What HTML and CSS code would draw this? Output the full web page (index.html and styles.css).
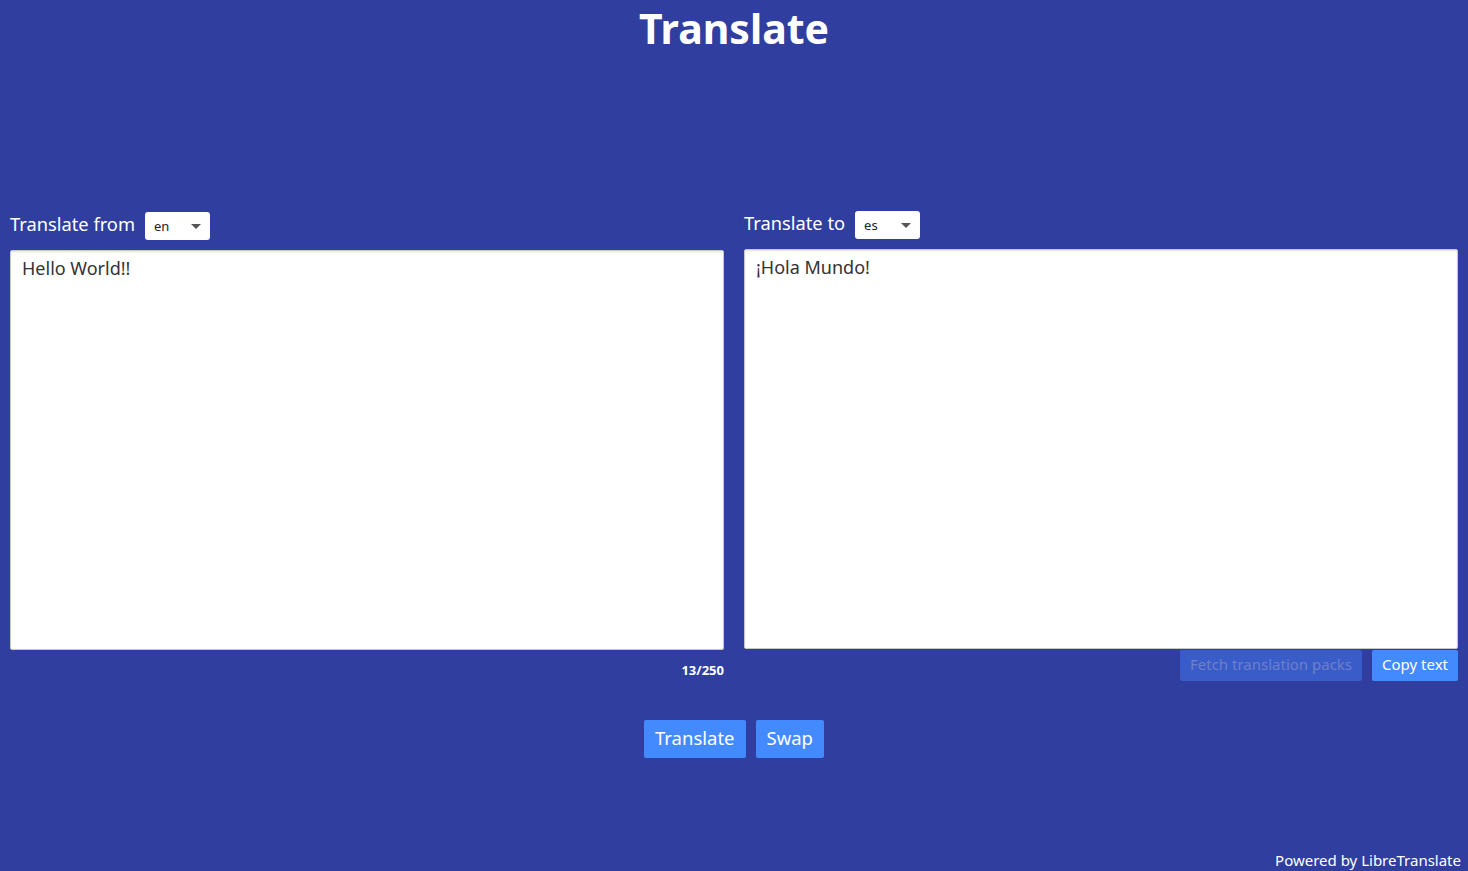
FILE: index.html
```html
<!DOCTYPE html>
<html>
<head>
<meta charset="utf-8">
<link rel="stylesheet" href="styles.css">
</head>
<body>
<h1 class="title">Translate</h1>
<main class="panels">
  <section class="panel">
    <div class="lang-row">
      <span class="lang-label">Translate from</span>
      <div class="select"><span>en</span><span class="caret"></span></div>
    </div>
    <div class="box">Hello World!!</div>
    <div class="under left-under"><span class="counter">13/250</span></div>
  </section>
  <section class="panel right">
    <div class="lang-row">
      <span class="lang-label">Translate to</span>
      <div class="select"><span>es</span><span class="caret"></span></div>
    </div>
    <div class="box">¡Hola Mundo!</div>
    <div class="under right-under">
      <button class="btn small disabled">Fetch translation packs</button>
      <button class="btn small">Copy text</button>
    </div>
  </section>
</main>
<div class="actions">
  <button class="btn big">Translate</button>
  <button class="btn big">Swap</button>
</div>
<footer class="footer">Powered by LibreTranslate</footer>
</body>
</html>
```
FILE: styles.css
```css
html, body {
  margin: 0;
  padding: 0;
  height: 100%;
}
body {
  background: #303f9f;
  font-family: "Noto Sans", "Open Sans", sans-serif;
  color: #fff;
  position: relative;
  overflow: hidden;
}
.title {
  margin: 0;
  padding-top: 2px;
  text-align: center;
  font-size: 41px;
  font-weight: 700;
  line-height: 52px;
}
.panels {
  display: grid;
  grid-template-columns: 1fr 1fr;
  column-gap: 20px;
  padding: 0 10px;
  margin-top: 157px;
}
.panel {
  display: flex;
  flex-direction: column;
}
.panel.right {
  margin-top: -1px;
}
.lang-row {
  display: flex;
  align-items: center;
  height: 30px;
  margin-bottom: 9px;
}
.lang-label {
  font-size: 18.3px;
  margin-right: 10px;
  margin-top: -5px;
}
.select {
  width: 65px;
  height: 28px;
  background: #fff;
  border-radius: 3px;
  color: #222;
  font-size: 13px;
  display: flex;
  align-items: center;
  justify-content: space-between;
  padding: 0 9px;
  box-sizing: border-box;
}
.caret {
  width: 0;
  height: 0;
  border-left: 5px solid transparent;
  border-right: 5px solid transparent;
  border-top: 5px solid #555;
}
.box {
  height: 400px;
  box-sizing: border-box;
  background: #fff;
  border: 1px solid #c8c8c8;
  border-radius: 2px;
  box-shadow: inset 0 1px 2px rgba(0,0,0,0.12);
  color: #333;
  font-size: 18px;
  line-height: 24px;
  padding: 5px 11px;
}
.under {
  display: flex;
  justify-content: flex-end;
}
.left-under {
  padding-top: 11px;
}
.counter {
  font-size: 13px;
  font-weight: 700;
}
.right-under {
  gap: 10px;
  padding-top: 1px;
}
.btn {
  font-family: inherit;
  border: none;
  border-radius: 2px;
  background: #448aff;
  color: #fff;
  cursor: pointer;
}
.btn.small {
  height: 31px;
  font-size: 15px;
  padding: 0 10px 3px;
}
.btn.disabled {
  background: #3a5cc8;
  color: #6c80cc;
}
.actions {
  display: flex;
  justify-content: center;
  gap: 10px;
  margin-top: 39px;
}
.btn.big {
  height: 38px;
  font-size: 18.5px;
  padding: 0 11px 3px;
}
.footer {
  position: absolute;
  right: 7px;
  bottom: 1px;
  font-size: 15px;
}
```
